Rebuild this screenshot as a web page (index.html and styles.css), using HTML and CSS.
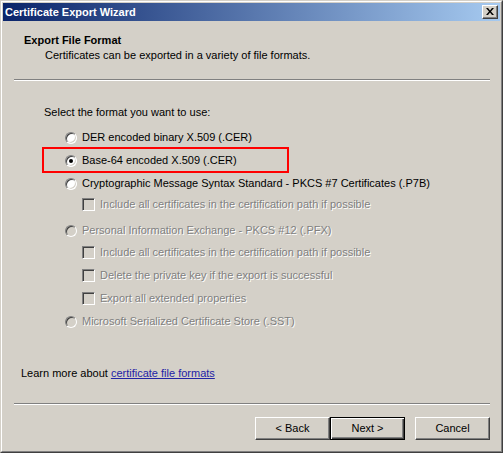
FILE: index.html
```html
<!DOCTYPE html>
<html>
<head>
<meta charset="utf-8">
<link rel="stylesheet" href="styles.css">
</head>
<body>
<div class="window">
  <div class="frame">
    <div class="titlebar">
      <span class="title">Certificate Export Wizard</span>
      <span class="close"><svg width="8" height="7" viewBox="0 0 8 7"><path d="M0 0h2l2 2.5 2-2.5h2l-3 3.5 3 3.5h-2l-2-2.5-2 2.5h-2l3-3.5z" fill="#000"/></svg></span>
    </div>
    <div class="header">
      <div class="h-title">Export File Format</div>
      <div class="h-sub">Certificates can be exported in a variety of file formats.</div>
    </div>
    <div class="sep sep-top"></div>
    <div class="prompt">Select the format you want to use:</div>
    <div class="opts">
      <div class="row radio-row r1"><span class="radio"></span><span>DER encoded binary X.509 (.CER)</span></div>
      <div class="row radio-row r-next highlighted"><span class="radio checked"></span><span>Base-64 encoded X.509 (.CER)</span></div>
      <div class="row radio-row r-next"><span class="radio"></span><span>Cryptographic Message Syntax Standard - PKCS #7 Certificates (.P7B)</span></div>
      <div class="row check-row c-first disabled"><span class="check"></span><span>Include all certificates in the certification path if possible</span></div>
      <div class="row radio-row r-after-check disabled"><span class="radio"></span><span>Personal Information Exchange - PKCS #12 (.PFX)</span></div>
      <div class="row check-row c-after-radio disabled"><span class="check"></span><span>Include all certificates in the certification path if possible</span></div>
      <div class="row check-row r-next disabled"><span class="check"></span><span>Delete the private key if the export is successful</span></div>
      <div class="row check-row r-next disabled"><span class="check"></span><span>Export all extended properties</span></div>
      <div class="row radio-row r-next disabled"><span class="radio"></span><span>Microsoft Serialized Certificate Store (.SST)</span></div>
    </div>
    <div class="learn">Learn more about <a class="link" href="#">certificate file formats</a></div>
    <div class="sep sep-bottom"></div>
    <div class="buttons">
      <div class="btn-pair">
        <span class="btn">&lt; Back</span>
        <span class="btn default">Next &gt;</span>
      </div>
      <span class="btn">Cancel</span>
    </div>
  </div>
</div>
</body>
</html>
```

FILE: styles.css
```css
html, body {
  margin: 0;
  padding: 0;
  background: #d4d0c8;
}
body {
  font-family: "Liberation Sans", Arial, sans-serif;
  font-size: 11px;
  line-height: 13px;
  color: #000;
}
.window {
  width: 503px;
  height: 453px;
  box-sizing: border-box;
  border: 1px solid;
  border-color: #d4d0c8 #404040 #404040 #d4d0c8;
  background: #d4d0c8;
}
.frame {
  height: 100%;
  box-sizing: border-box;
  border: 1px solid;
  border-color: #fff #808080 #808080 #fff;
  padding: 1px;
}
.titlebar {
  height: 18px;
  display: flex;
  align-items: center;
  justify-content: space-between;
  background: linear-gradient(to right, #0a246a, #a6caf0);
  padding: 0 2px 0 2px;
}
.title {
  color: #fff;
  font-weight: bold;
  font-size: 11px;
}
.close {
  width: 16px;
  height: 14px;
  box-sizing: border-box;
  border: 1px solid;
  border-color: #fff #404040 #404040 #fff;
  box-shadow: inset -1px -1px 0 #808080;
  background: #d4d0c8;
  display: flex;
  align-items: flex-start;
  justify-content: flex-start;
  padding: 2px 0 0 3px;
}
.close svg { display: block; }
.header {
  padding: 13px 0 0 21px;
}
.h-title {
  font-weight: bold;
}
.h-sub {
  margin-top: 2px;
  padding-left: 21px;
}
.sep {
  height: 1px;
  background: #808080;
  border-bottom: 1px solid #fff;
  margin-left: 11px;
  margin-right: 10px;
}
.sep-top { margin-top: 17px; }
.prompt {
  margin-top: 25px;
  padding-left: 41px;
}
.opts {
  margin-top: 12px;
}
.row {
  display: flex;
  align-items: center;
  height: 13px;
  gap: 5px;
  white-space: nowrap;
}
.radio-row { margin-left: 62px; }
.check-row { margin-left: 79px; }
.r-next { margin-top: 10px; }
.c-first { margin-top: 8px; }
.r-after-check { margin-top: 13px; }
.c-after-radio { margin-top: 9px; }
.radio {
  width: 12px;
  height: 12px;
  box-sizing: border-box;
  border-radius: 50%;
  border: 1px solid;
  border-color: #808080 #fff #fff #808080;
  box-shadow: inset 1px 1px 0 #404040, inset -1px -1px 0 #d4d0c8;
  background: #fff;
  position: relative;
  flex: none;
}
.radio.checked::after {
  content: "";
  position: absolute;
  left: 3px;
  top: 3px;
  width: 4px;
  height: 4px;
  border-radius: 50%;
  background: #000;
}
.check {
  width: 13px;
  height: 13px;
  box-sizing: border-box;
  border: 1px solid;
  border-color: #808080 #fff #fff #808080;
  box-shadow: inset 1px 1px 0 #404040, inset -1px -1px 0 #d4d0c8;
  background: #fff;
  flex: none;
}
.disabled {
  color: #808080;
  text-shadow: 1px 1px 0 #fff;
}
.disabled .radio,
.disabled .check {
  background: #d4d0c8;
}
.highlighted {
  position: relative;
}
.highlighted::before {
  content: "";
  position: absolute;
  left: -23px;
  top: -7px;
  width: 247px;
  height: 26px;
  box-sizing: border-box;
  border: 2px solid #ff0000;
}
.learn {
  margin-top: 39px;
  padding-left: 18px;
}
.link {
  color: #2323a6;
  text-decoration: underline;
}
.sep-bottom { margin-top: 23px; }
.buttons {
  margin-top: 12px;
  display: flex;
  justify-content: flex-end;
  gap: 10px;
  padding-right: 10px;
}
.btn-pair {
  display: flex;
}
.btn {
  width: 75px;
  height: 23px;
  box-sizing: border-box;
  border: 1px solid;
  border-color: #fff #404040 #404040 #fff;
  box-shadow: inset -1px -1px 0 #808080;
  display: flex;
  align-items: center;
  justify-content: center;
  background: #d4d0c8;
}
.btn.default {
  border-color: #000;
  box-shadow: inset 1px 1px 0 #fff, inset -1px -1px 0 #404040, inset -2px -2px 0 #808080;
}
```
